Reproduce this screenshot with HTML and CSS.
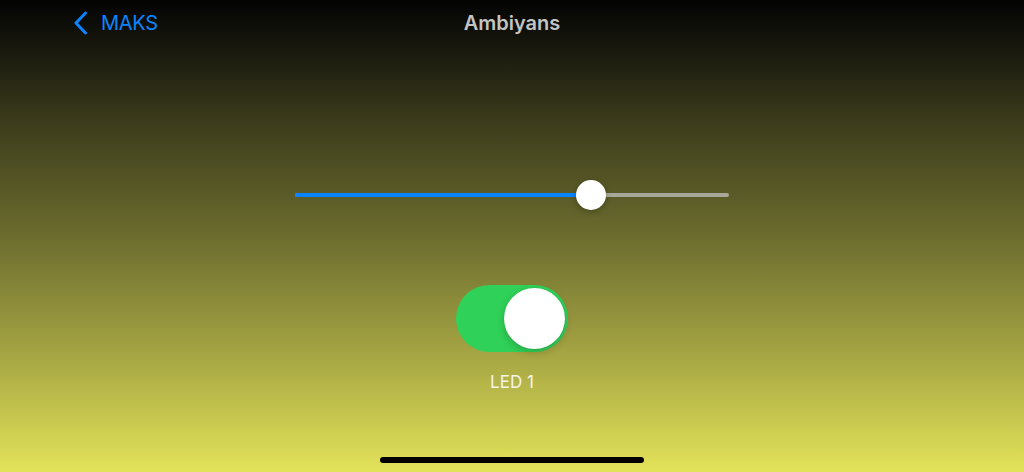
FILE: index.html
```html
<!DOCTYPE html>
<html lang="en">
<head>
  <meta charset="UTF-8" />
  <meta name="viewport" content="width=device-width, initial-scale=1.0" />
  <title>Ambiyans</title>
  <link rel="stylesheet" href="styles.css">
</head>
<body>
  <div class="screen">
    <header class="nav">
      <a class="back" href="#">
        <svg class="chevron" width="15" height="24" viewBox="0 0 15 24">
          <path d="M12.5 2 L3 12 L12.5 22" fill="none" stroke="#0a84ff" stroke-width="3" stroke-linecap="round" stroke-linejoin="round"/>
        </svg>
        <span>MAKS</span>
      </a>
      <h1 class="title">Ambiyans</h1>
    </header>

    <main class="content">
      <div class="slider">
        <div class="track">
          <div class="fill" style="width: 68.2%"></div>
          <div class="knob"></div>
        </div>
      </div>

      <div class="toggle-group">
        <div class="switch on"><div class="switch-knob"></div></div>
        <div class="label">LED 1</div>
      </div>
    </main>

    <div class="home-bar"></div>
  </div>
</body>
</html>
```

FILE: styles.css
```css
* {
  box-sizing: border-box;
}

html, body {
  margin: 0;
  height: 100%;
}

body {
  font-family: "Inter", "Liberation Sans", sans-serif;
  overflow: hidden;
}

.screen {
  position: relative;
  height: 472px;
  display: flex;
  flex-direction: column;
  background: linear-gradient(180deg, #030303 0%, #1c1c10 12%, #3a3a1b 25%, #6c6c2f 50%, #a5a543 75%, #e3e35a 100%);
}

.nav {
  position: relative;
  height: 46px;
  display: flex;
  align-items: center;
  padding-left: 73px;
}

.back {
  display: flex;
  align-items: center;
  gap: 13px;
  color: #0a84ff;
  text-decoration: none;
  font-size: 20px;
  letter-spacing: -0.3px;
}

.chevron {
  display: block;
}

.title {
  position: absolute;
  left: 0;
  right: 0;
  top: 0;
  margin: 0;
  height: 47px;
  line-height: 47px;
  text-align: center;
  font-size: 20px;
  font-weight: 600;
  color: #c4c4c4;
}

.content {
  flex: 1;
  display: flex;
  flex-direction: column;
  align-items: center;
  padding-top: 147px;
}

.slider {
  width: 434px;
}

.track {
  position: relative;
  height: 4px;
  border-radius: 2px;
  background: #a9a79a;
}

.fill {
  height: 4px;
  border-radius: 2px;
  background: #0a84ff;
}

.knob {
  position: absolute;
  left: calc(68.2% - 15px);
  top: -13px;
  width: 30px;
  height: 30px;
  border-radius: 50%;
  background: #fff;
  box-shadow: 0 2px 6px rgba(0, 0, 0, 0.25);
}

.toggle-group {
  margin-top: 88px;
  display: flex;
  flex-direction: column;
  align-items: center;
}

.switch {
  width: 112px;
  height: 67px;
  border-radius: 34px;
  background: #30d158;
  padding: 3px;
  display: flex;
  justify-content: flex-end;
}

.switch-knob {
  width: 61px;
  height: 61px;
  border-radius: 50%;
  background: #fff;
  box-shadow: 0 3px 8px rgba(0, 0, 0, 0.2), 0 0 1px rgba(0, 0, 0, 0.15);
}

.label {
  margin-top: 20px;
  font-size: 17px;
  color: #f4f4ec;
}

.home-bar {
  position: absolute;
  left: 380px;
  bottom: 9px;
  width: 264px;
  height: 6px;
  border-radius: 3px;
  background: #000;
}
```
